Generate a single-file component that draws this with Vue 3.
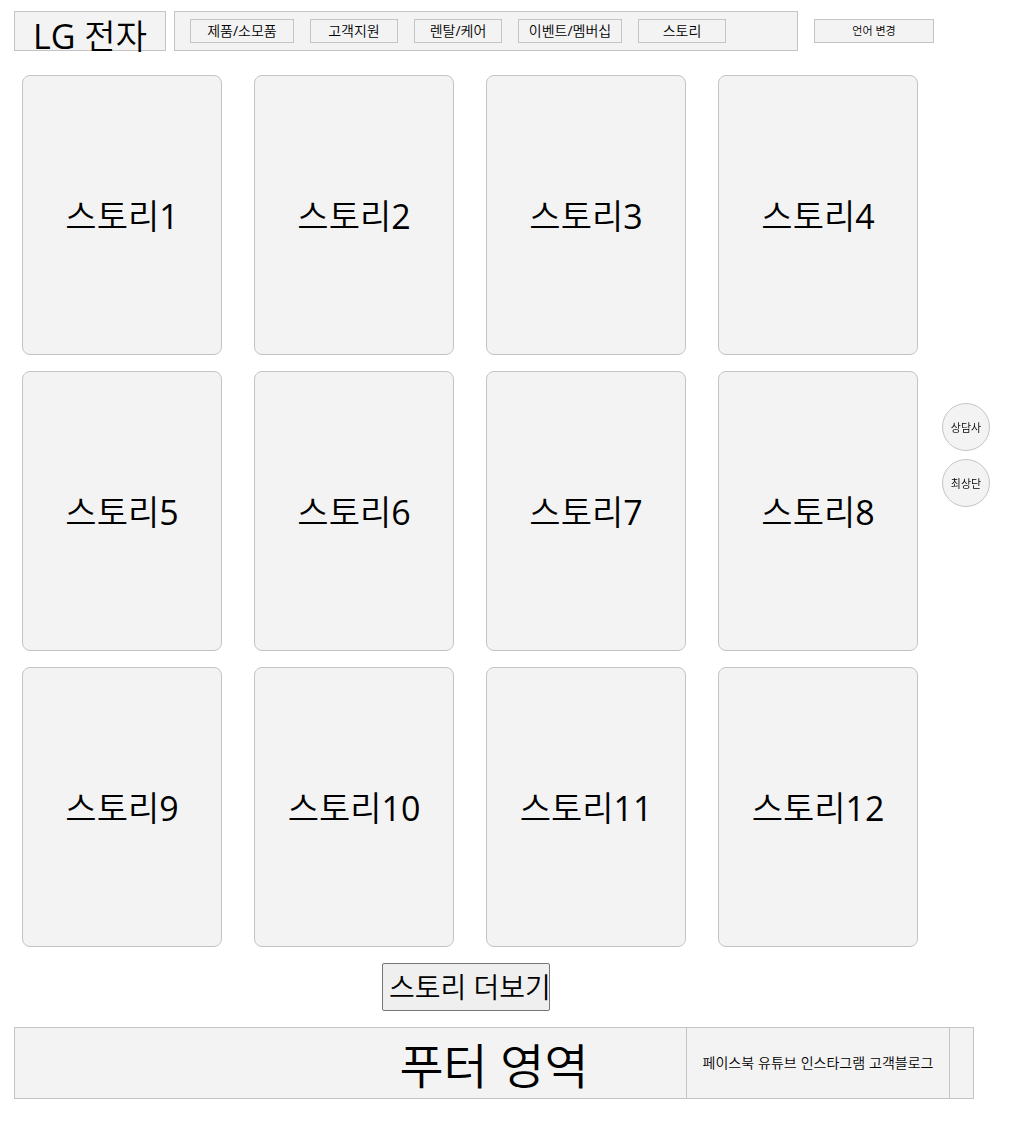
<script setup>
const menus = [
  { label: '제품/소모품', wide: true },
  { label: '고객지원', wide: false },
  { label: '렌탈/케어', wide: false },
  { label: '이벤트/멤버십', wide: true },
  { label: '스토리', wide: false },
]
const stories = Array.from({ length: 12 }, (_, i) => `스토리${i + 1}`)
const scrollTop = () => window.scrollTo({ top: 0, behavior: 'smooth' })
</script>

<template>
  <div class="page">
    <header class="header">
      <h1 class="logo box">LG 전자</h1>
      <nav class="nav box">
        <a
          v-for="menu in menus"
          :key="menu.label"
          href="#"
          class="menu box"
          :class="{ wide: menu.wide }"
        >{{ menu.label }}</a>
      </nav>
      <button type="button" class="language box">언어 변경</button>
    </header>

    <main>
      <div class="stories">
        <article v-for="story in stories" :key="story" class="story box">{{ story }}</article>
      </div>
      <div class="more-row">
        <button type="button" class="more">스토리 더보기</button>
      </div>
    </main>

    <footer class="footer box">
      <p class="footer-title">푸터 영역</p>
      <div class="social box">
        <a href="#">페이스북</a>
        <a href="#">유튜브</a>
        <a href="#">인스타그램</a>
        <a href="#">고객블로그</a>
      </div>
    </footer>

    <aside class="floating">
      <button type="button" class="round box">상담사</button>
      <button type="button" class="round box" @click="scrollTop">최상단</button>
    </aside>
  </div>
</template>

<style>
body {
  background: #fff;
}
</style>

<style scoped>
* {
  box-sizing: border-box;
}
.page {
  padding: 11px 35px 27px 14px;
  color: #000;
  font-family: "Open Sans", "Noto Sans CJK KR DemiLight", "Noto Sans CJK KR", sans-serif;
  font-size: 14px;
  font-weight: 400;
}
h1,
p {
  margin: 0;
  font-weight: inherit;
}
a {
  color: inherit;
  text-decoration: none;
}
button {
  padding: 0;
  color: inherit;
  font-family: inherit;
  font-weight: inherit;
  white-space: nowrap;
}
.box {
  border: 1px solid #c4c4c4;
  background: #f3f3f3;
}
.header {
  display: flex;
  align-items: center;
  margin-right: 40px;
}
.logo {
  width: 152px;
  height: 40px;
  margin-right: 8px;
  font-size: 34px;
  line-height: 48px;
  text-align: center;
  white-space: nowrap;
}
.nav {
  flex: 1;
  display: flex;
  align-items: center;
  gap: 16px;
  height: 40px;
  margin-right: 16px;
  padding: 0 15px;
}
.menu {
  width: 88px;
  height: 24px;
  line-height: 22px;
  text-align: center;
  white-space: nowrap;
}
.menu.wide {
  width: 104px;
}
.language {
  width: 120px;
  height: 24px;
  font-size: 11px;
  line-height: 22px;
}
.stories {
  display: grid;
  grid-template-columns: repeat(4, minmax(0, 1fr));
  gap: 16px 32px;
  margin: 24px 56px 0 8px;
}
.story {
  display: flex;
  align-items: center;
  justify-content: center;
  height: 280px;
  padding-top: 2px;
  border-radius: 8px;
  font-size: 34px;
  line-height: 48px;
}
.more-row {
  display: flex;
  justify-content: center;
  margin: 16px 56px 16px 0;
}
.more {
  width: 168px;
  height: 48px;
  padding-left: 6px;
  border: 1px solid #767676;
  border-radius: 2px;
  background: #efefef;
  font-size: 28px;
  line-height: 46px;
}
.footer {
  display: grid;
  grid-template-columns: 1fr auto 1fr;
  height: 72px;
}
.footer-title {
  grid-column: 2;
  padding-top: 6px;
  font-size: 48px;
  line-height: 64px;
  white-space: nowrap;
}
.social {
  display: flex;
  align-items: center;
  justify-content: center;
  gap: 4px;
  justify-self: end;
  width: 264px;
  margin: -1px 23px -1px 0;
  padding-bottom: 2px;
  white-space: nowrap;
}
.floating {
  position: fixed;
  top: 403px;
  right: 19px;
  display: flex;
  flex-direction: column;
  gap: 8px;
}
.round {
  width: 48px;
  height: 48px;
  border-radius: 50%;
  font-size: 11px;
}
</style>
